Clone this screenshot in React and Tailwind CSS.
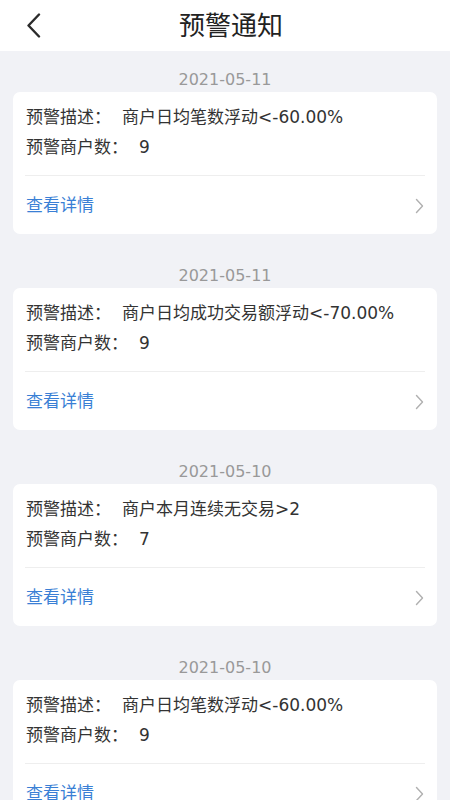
import React from "react";

const alerts = [
    { date: "2021-05-11", desc: "商户日均笔数浮动<-60.00%", count: 9 },
    { date: "2021-05-11", desc: "商户日均成功交易额浮动<-70.00%", count: 9 },
    { date: "2021-05-10", desc: "商户本月连续无交易>2", count: 7 },
    { date: "2021-05-10", desc: "商户日均笔数浮动<-60.00%", count: 9 },
];

const font = { fontFamily: '"DejaVu Sans", "Noto Sans CJK SC", sans-serif' };

const App = () => {
    return (
        <div className="min-h-screen bg-[#f1f2f6] text-[#333]" style={font}>
            <div className="h-[51px] bg-white relative flex items-center justify-center">
                <svg className="absolute left-[26px] top-[13px]" width="15" height="25" viewBox="0 0 15 25" fill="none">
                    <path d="M13 1.5 L2.5 12.5 L13 23.5" stroke="#2b2b2b" strokeWidth="2.4" strokeLinecap="round" strokeLinejoin="round" />
                </svg>
                <h1 className="pl-[12px] text-[26px] leading-none text-[#222]">预警通知</h1>
            </div>

            <div className="px-[13px]">
                {alerts.map((item, i) => (
                    <div key={i}>
                        <div className="pt-[18px] pb-[1px] text-center text-[16px] leading-[22px] text-[#999]">{item.date}</div>
                        <div className="mb-[13px] bg-white rounded-[7px] overflow-hidden">
                            <div className="px-[13px] pt-[10px] pb-[13px] text-[17px] leading-[30px]">
                                <div className="flex">
                                    <span className="mr-[11px]">预警描述：</span>
                                    <span>{item.desc}</span>
                                </div>
                                <div className="flex">
                                    <span className="mr-[11px]">预警商户数：</span>
                                    <span>{item.count}</span>
                                </div>
                            </div>
                            <div className="mx-[12px] h-px bg-[#eeeeee]"></div>
                            <div className="h-[58px] px-[13px] pt-[2px] flex items-center justify-between">
                                <span className="text-[17px] text-[#3a7fd5]">查看详情</span>
                                <svg width="9" height="16" viewBox="0 0 9 16" fill="none">
                                    <path d="M1.5 1.5 L7.5 8 L1.5 14.5" stroke="#b0b0b0" strokeWidth="1.4" strokeLinecap="round" strokeLinejoin="round" />
                                </svg>
                            </div>
                        </div>
                    </div>
                ))}
            </div>
        </div>
    );
};

export default App;
